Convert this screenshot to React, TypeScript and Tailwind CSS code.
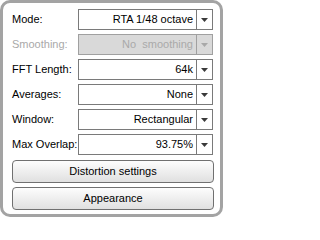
import React from "react";

type Row = { label: string; value: string; disabled?: boolean };

const rows: Row[] = [
  { label: "Mode:", value: "RTA 1/48 octave" },
  { label: "Smoothing:", value: "No  smoothing", disabled: true },
  { label: "FFT Length:", value: "64k" },
  { label: "Averages:", value: "None" },
  { label: "Window:", value: "Rectangular" },
  { label: "Max Overlap:", value: "93.75%" },
];

function Arrow({ disabled }: { disabled?: boolean }) {
  return (
    <svg width="7" height="4" viewBox="0 0 7 4">
      <polygon points="0,0 7,0 3.5,4" fill={disabled ? "#a8a8a8" : "#3a3a3a"} />
    </svg>
  );
}

export default function App() {
  return (
    <div
      className="w-[223px] h-[217px] border-[3px] border-[#a3a3a3] rounded-[10px] bg-white pt-[6px] pl-[9px] pr-[6px] text-[11px] leading-none text-black"
      style={{ fontFamily: '"Liberation Sans", Arial, sans-serif' }}
    >
      <div className="flex flex-col gap-[4px]">
        {rows.map((r) => (
          <div key={r.label} className="flex items-center h-[21px]">
            <div
              className={
                "w-[66px] whitespace-nowrap " +
                (r.disabled ? "text-[#a9a9a9]" : "text-black")
              }
            >
              {r.label}
            </div>
            <div
              className={
                "w-[135px] h-[21px] flex border " +
                (r.disabled
                  ? "border-[#a0a0a0] bg-[#d9d9d9]"
                  : "border-[#7a7a7a] bg-white")
              }
            >
              <div
                className={
                  "flex-1 flex items-center justify-end pr-[3px] whitespace-pre " +
                  (r.disabled ? "text-[#a9a9a9]" : "text-black")
                }
              >
                {r.value}
              </div>
              <div
                className={
                  "w-[16px] flex items-center justify-center border-l " +
                  (r.disabled ? "border-[#a0a0a0]" : "border-[#7a7a7a]")
                }
              >
                <Arrow disabled={r.disabled} />
              </div>
            </div>
          </div>
        ))}
        <div className="flex flex-col gap-[4px] pt-[1px]">
          {["Distortion settings", "Appearance"].map((b) => (
            <div
              key={b}
              className="w-[202px] h-[23px] flex items-center justify-center rounded-[4px] border border-[#707070] bg-gradient-to-b from-[#fdfdfd] to-[#e0e0e0]"
            >
              {b}
            </div>
          ))}
        </div>
      </div>
    </div>
  );
}
